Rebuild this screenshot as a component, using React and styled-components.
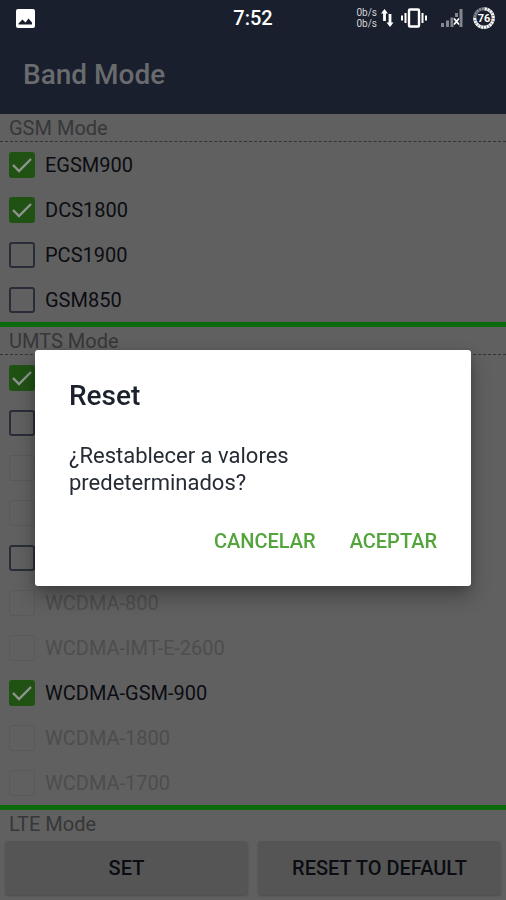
import React from "react";
import styled, { createGlobalStyle } from "styled-components";

const GlobalStyle = createGlobalStyle`
  *, *::before, *::after { box-sizing: border-box; }
  html, body, #root { height: 100%; }
  body {
    margin: 0;
    background: #606060;
    font-family: Roboto, "Liberation Sans", sans-serif;
    overflow: hidden;
  }
  button { font-family: inherit; border: 0; margin: 0; }
  h1, h2, p { margin: 0; }
`;

const Screen = styled.div`
  height: 100vh;
  display: flex;
  flex-direction: column;
  background: #606060;
`;

const StatusBar = styled.header`
  flex: none;
  height: 36px;
  padding: 0 11px;
  display: grid;
  grid-template-columns: 1fr auto 1fr;
  align-items: center;
  background: #191f2c;
  color: #ffffff;
  svg { display: block; }
`;

const Notifications = styled.div`
  padding-left: 5px;
`;

const Clock = styled.time`
  font-size: 20px;
  line-height: 36px;
  font-weight: 500;
`;

const StatusIcons = styled.div`
  display: flex;
  align-items: center;
  justify-content: flex-end;
`;

const NetSpeed = styled.div`
  font-size: 10px;
  line-height: 11px;
  color: #d4d5d8;
  margin-right: 4px;
`;

const VibrateSlot = styled.div`
  margin-left: 7px;
`;

const SignalSlot = styled.div`
  margin: 0 10px 0 14px;
`;

const TitleBar = styled.div`
  flex: none;
  height: 78px;
  padding: 0 23px;
  display: flex;
  align-items: center;
  background: #191f2c;
  color: #696b6e;
`;

const Title = styled.h1`
  font-size: 28px;
  line-height: 32px;
  font-weight: 500;
`;

const Content = styled.main`
  flex: 1;
  min-height: 0;
  overflow: hidden;
`;

const Group = styled.section`
  border-bottom: 5px solid #0b6b0d;
`;

const GroupTitle = styled.h2`
  height: 28px;
  padding: 0 9px;
  border-bottom: 1px dashed #343434;
  font-size: 20px;
  line-height: 28px;
  font-weight: 400;
  color: #363738;
`;

const Option = styled.label`
  height: 45px;
  padding: 0 9px;
  display: flex;
  align-items: center;
  gap: 10px;
  font-size: 20px;
  line-height: 24px;
  color: ${(p) => (p.$off ? "#4d4d4d" : "#0b0d12")};
`;

const Tick = styled.input`
  appearance: none;
  flex: none;
  width: 26px;
  height: 26px;
  margin: 0;
  border: 2px solid #282d38;
  border-radius: 3px;
  &:checked {
    border: 0;
    background: #205214 url("data:image/svg+xml,%3Csvg xmlns='http://www.w3.org/2000/svg' viewBox='0 0 26 26'%3E%3Cpath d='M4 13l6 6L22 7' fill='none' stroke='%23909390' stroke-width='2.4'/%3E%3C/svg%3E") center / 26px 26px no-repeat;
  }
  &:disabled { border: 1px solid #595959; }
`;

const Footer = styled.footer`
  flex: none;
  padding: 4px 5px 5px;
  display: grid;
  grid-template-columns: 1fr 1fr;
  gap: 10px;
`;

const FooterButton = styled.button`
  height: 54px;
  padding: 0;
  border-radius: 4px;
  background: #555555;
  box-shadow: 0 1px 2px #4c4c4c;
  color: #0b0d12;
  font-size: 20px;
  line-height: 24px;
  font-weight: 500;
`;

const Overlay = styled.div`
  position: fixed;
  inset: 36px 0 0;
  padding: 0 35px;
  display: flex;
  align-items: center;
  justify-content: center;
`;

const Dialog = styled.div`
  width: 100%;
  max-width: 560px;
  padding: 30px 22px 21px 34px;
  border-radius: 3px;
  background: #ffffff;
  box-shadow: 0 10px 20px rgba(0, 0, 0, 0.3), 0 2px 8px rgba(0, 0, 0, 0.15);
  color: #1b212b;
`;

const DialogTitle = styled.h2`
  font-size: 28px;
  line-height: 32px;
  font-weight: 500;
`;

const DialogText = styled.p`
  max-width: 320px;
  margin-top: 30px;
  font-size: 22px;
  line-height: 27px;
  color: #252b33;
`;

const DialogActions = styled.div`
  margin-top: 21px;
  display: flex;
  justify-content: flex-end;
  gap: 10px;
`;

const DialogButton = styled.button`
  height: 48px;
  padding: 0 12px;
  background: transparent;
  color: #52a43b;
  font-size: 20px;
  line-height: 24px;
  font-weight: 500;
`;

const gsm = [
  { id: "egsm900", name: "EGSM900", on: true },
  { id: "dcs1800", name: "DCS1800", on: true },
  { id: "pcs1900", name: "PCS1900" },
  { id: "gsm850", name: "GSM850" },
];

const umts = [
  { id: "umts1", on: true },
  { id: "umts2" },
  { id: "umts3", off: true },
  { id: "umts4", off: true },
  { id: "umts5" },
  { id: "umts6", name: "WCDMA-800", off: true },
  { id: "umts7", name: "WCDMA-IMT-E-2600", off: true },
  { id: "umts8", name: "WCDMA-GSM-900", on: true },
  { id: "umts9", name: "WCDMA-1800", off: true },
  { id: "umts10", name: "WCDMA-1700", off: true },
];

function Band({ name, on, off, position }) {
  return (
    <Option $off={off}>
      <Tick
        type="checkbox"
        defaultChecked={on}
        disabled={off}
        aria-label={name ? undefined : `WCDMA ${position}`}
      />
      {name}
    </Option>
  );
}

function PictureIcon() {
  return (
    <svg width="19" height="19" viewBox="0 0 19 19" aria-hidden="true">
      <path
        fill="#fff"
        fillRule="evenodd"
        d="M2 0h15a2 2 0 0 1 2 2v15a2 2 0 0 1-2 2H2a2 2 0 0 1-2-2V2a2 2 0 0 1 2-2zM2.500 15.500h13.500v-2l-3.500-4-3 4L6.500 10.500 2.500 14.500z"
      />
    </svg>
  );
}

function TransferIcon() {
  return (
    <svg width="13" height="18" viewBox="0 0 13 18" fill="#fff" aria-hidden="true">
      <path d="M3.500 0L7 4.500H4.900V12H2.100V4.500H0zM9 18L5.500 13.500H7.600V5H10.400V13.500H12.500z" />
    </svg>
  );
}

function VibrateIcon() {
  return (
    <svg width="26" height="20" viewBox="0 0 26 20" fill="none" stroke="#fff" strokeWidth="2" aria-hidden="true">
      <rect x="8" y="1.500" width="10" height="17" rx="1" strokeWidth="2.400" />
      <path d="M4.500 5v10M21.500 5v10M1 7.500v5M25 7.500v5" />
    </svg>
  );
}

function SignalIcon() {
  return (
    <svg width="22" height="20" viewBox="0 0 22 20" aria-hidden="true">
      <path fill="#85888e" d="M0 15h3v4H0zM5 12.500h3V19H5zM9.500 9.500h3V19h-3zM14 5h3v4h-3zM18.500 1h3v18h-3z" />
      <path fill="none" stroke="#191f2c" strokeWidth="4" d="M13 10.500l5 6M18 10.500l-5 6" />
      <path fill="none" stroke="#fff" strokeWidth="1.800" d="M13 10.500l5 6M18 10.500l-5 6" />
    </svg>
  );
}

function BatteryIcon() {
  return (
    <svg width="22" height="22" viewBox="0 0 22 22" aria-hidden="true">
      <g fill="none" strokeWidth="3" transform="rotate(-90 11 11)">
        <circle cx="11" cy="11" r="9.300" stroke="#868990" />
        <circle cx="11" cy="11" r="9.300" stroke="#f4f4f4" pathLength="100" strokeDasharray="76 24" />
        <circle cx="11" cy="11" r="9.300" stroke="#191f2c" strokeOpacity="0.55" pathLength="100" strokeDasharray="1.400 3.600" />
      </g>
      <text x="11" y="15" fill="#fff" fontFamily="Roboto, sans-serif" fontSize="11" fontWeight="700" textAnchor="middle">
        76
      </text>
    </svg>
  );
}

export default function App() {
  return (
    <Screen>
      <GlobalStyle />
      <StatusBar>
        <Notifications>
          <PictureIcon />
        </Notifications>
        <Clock>7:52</Clock>
        <StatusIcons>
          <NetSpeed>
            <div>0b/s</div>
            <div>0b/s</div>
          </NetSpeed>
          <TransferIcon />
          <VibrateSlot>
            <VibrateIcon />
          </VibrateSlot>
          <SignalSlot>
            <SignalIcon />
          </SignalSlot>
          <BatteryIcon />
        </StatusIcons>
      </StatusBar>
      <TitleBar>
        <Title>Band Mode</Title>
      </TitleBar>
      <Content>
        <Group>
          <GroupTitle>GSM Mode</GroupTitle>
          {gsm.map(({ id, ...band }, i) => (
            <Band key={id} position={i + 1} {...band} />
          ))}
        </Group>
        <Group>
          <GroupTitle>UMTS Mode</GroupTitle>
          {umts.map(({ id, ...band }, i) => (
            <Band key={id} position={i + 1} {...band} />
          ))}
        </Group>
        <GroupTitle>LTE Mode</GroupTitle>
      </Content>
      <Footer>
        <FooterButton type="button">SET</FooterButton>
        <FooterButton type="button">RESET TO DEFAULT</FooterButton>
      </Footer>
      <Overlay>
        <Dialog role="dialog" aria-modal="true" aria-labelledby="reset-title">
          <DialogTitle id="reset-title">Reset</DialogTitle>
          <DialogText>¿Restablecer a valores predeterminados?</DialogText>
          <DialogActions>
            <DialogButton type="button">CANCELAR</DialogButton>
            <DialogButton type="button">ACEPTAR</DialogButton>
          </DialogActions>
        </Dialog>
      </Overlay>
    </Screen>
  );
}
